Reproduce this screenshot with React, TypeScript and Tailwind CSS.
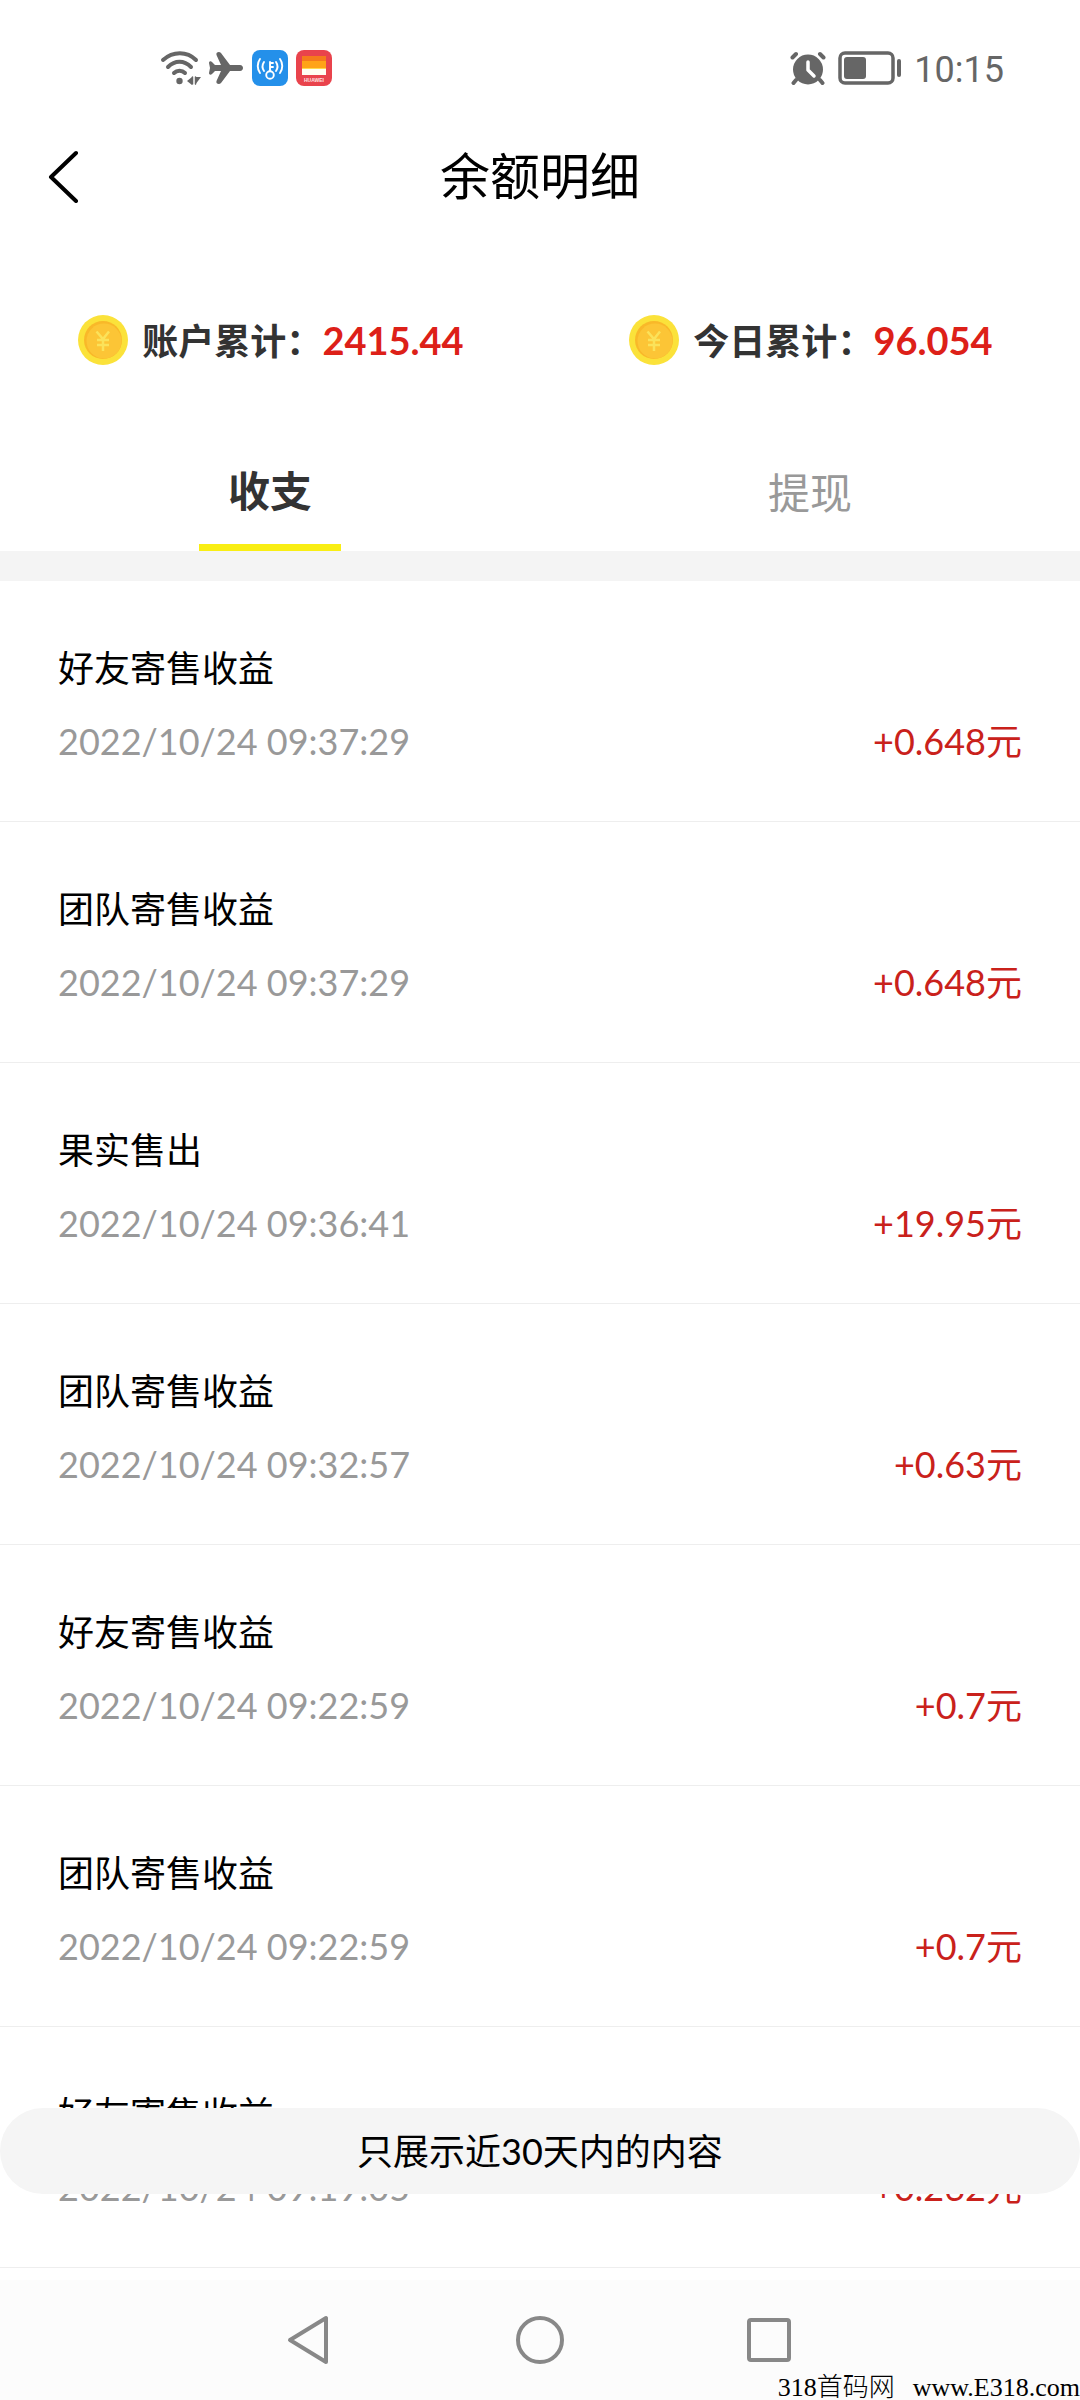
import { useState } from 'react'
import clsx from 'clsx'

interface BalanceRecord {
  id: number
  title: string
  time: string
  amount: string
}

const records: BalanceRecord[] = [
  { id: 1, title: '好友寄售收益', time: '2022/10/24 09:37:29', amount: '+0.648' },
  { id: 2, title: '团队寄售收益', time: '2022/10/24 09:37:29', amount: '+0.648' },
  { id: 3, title: '果实售出', time: '2022/10/24 09:36:41', amount: '+19.95' },
  { id: 4, title: '团队寄售收益', time: '2022/10/24 09:32:57', amount: '+0.63' },
  { id: 5, title: '好友寄售收益', time: '2022/10/24 09:22:59', amount: '+0.7' },
  { id: 6, title: '团队寄售收益', time: '2022/10/24 09:22:59', amount: '+0.7' },
  { id: 7, title: '好友寄售收益', time: '2022/10/24 09:19:05', amount: '+0.262' }
]

const tabs = ['收支', '提现']

const WifiIcon = () => (
  <svg width="42" height="36" viewBox="0 0 42 36" fill="none" stroke="#666" strokeWidth="4" strokeLinecap="round">
    <path d="M3 10C13 1 27 1 36 10" />
    <path d="M8 17C15 10 24 10 31 17" />
    <path d="M14 23C17 20 22 20 25 23" />
    <circle cx="19.500" cy="31" r="3.200" fill="#666" stroke="none" />
    <path d="M27 31L32 27V35ZM35 27H41L35 35Z" fill="#666" stroke="none" />
    <path d="M32.500 27V34M35.500 27V34" strokeWidth="1.500" />
  </svg>
)

const PlaneIcon = () => (
  <svg width="36" height="36" viewBox="0 0 36 36" fill="#666">
    <path d="M1 13C1 11 3 11 4 12L7 15H13L8.500 5C7.500 2 11.500 1 13 3L22 15H32C36 15 36 21 32 21H22L13 33C11.500 35 7.500 34 8.500 31L13 21H7L4 24C3 25 1 25 1 23L2 18Z" />
  </svg>
)

const HotspotIcon = () => (
  <svg width="36" height="36" viewBox="0 0 36 36" fill="none" stroke="#fff" strokeWidth="1.900" strokeLinecap="round">
    <rect width="36" height="36" rx="8" fill="#2490ea" stroke="none" />
    <circle cx="18" cy="25" r="3.800" />
    <path d="M18 21V12M18 13H21M18 17H21" />
    <path d="M12 12C10 15 10 18 12 21M8 9C5 13 5 19 8 23M24 12C26 15 26 18 24 21M28 9C31 13 31 19 28 23" />
  </svg>
)

const HuaweiIcon = () => (
  <svg width="36" height="36" viewBox="0 0 36 36">
    <rect width="36" height="36" rx="8" fill="#e9434c" />
    <rect x="6" y="6" width="24" height="5" fill="#f57a1c" />
    <rect x="6" y="11" width="24" height="7" fill="#ffa318" />
    <rect x="6" y="18" width="24" height="1" fill="#ffd94d" />
    <rect x="6" y="19" width="24" height="6" fill="#fffdf2" />
    <text x="18" y="32" fill="#ffe2e2" fontSize="5" fontWeight="700" textAnchor="middle" fontFamily="Liberation Sans">HUAWEI</text>
  </svg>
)

const AlarmIcon = () => (
  <svg width="36" height="36" viewBox="0 0 36 36" fill="none" stroke="#666" strokeWidth="4" strokeLinecap="round">
    <circle cx="18" cy="19.500" r="15" fill="#666" stroke="none" />
    <path d="M2.500 7.500L6 4M30 4L33.500 7.500M3.500 33L6 30M30 30L32.500 33" />
    <path d="M18 12V20L24 26" stroke="#fff" strokeWidth="3.500" strokeLinejoin="round" />
  </svg>
)

const BatteryIcon = () => (
  <svg width="64" height="36" viewBox="0 0 64 36" fill="none">
    <rect x="2" y="3" width="53" height="30" rx="5" stroke="#666" strokeWidth="3.500" />
    <rect x="6" y="7" width="22" height="22" rx="3" fill="#666" />
    <path d="M61 11V25" stroke="#666" strokeWidth="4" strokeLinecap="round" />
  </svg>
)

const CoinIcon = () => (
  <svg width="50" height="50" viewBox="0 0 50 50" fill="none">
    <circle cx="25" cy="25" r="25" fill="#fbe23a" />
    <circle cx="25" cy="25" r="19" fill="#f9b829" />
    <circle cx="26" cy="26" r="17.500" fill="#fcc536" />
    <path d="M18.500 16.500L25 24L31 16.500M25 24V36M19 25H31M19 30H31" stroke="#fbe25a" strokeWidth="2.500" />
  </svg>
)

interface TotalProps {
  label: string
  value: string
}

const Total = ({ label, value }: TotalProps) => (
  <div className="flex flex-1 items-center justify-center gap-3.5 pl-0.5">
    <CoinIcon />
    <p className="text-[36px] leading-[54px] font-bold text-[#333]">
      {label}：<span className="text-[38px] text-[#dd2018]">{value}</span>
    </p>
  </div>
)

export default function App() {
  const [activeTab, setActiveTab] = useState(tabs[0])

  return (
    <div className="relative flex min-h-screen flex-col bg-white font-[Lato,'Noto_Sans_CJK_SC',sans-serif] text-black">
      {/* Status bar */}
      <div className="flex h-[126px] items-start justify-between pt-[50px] pr-[76px] pl-[160px]">
        <div className="flex items-center gap-2">
          <div className="flex items-center gap-1.5">
            <WifiIcon />
            <PlaneIcon />
          </div>
          <HotspotIcon />
          <HuaweiIcon />
        </div>
        <div className="flex items-start gap-3">
          <AlarmIcon />
          <BatteryIcon />
          <span className="pt-0.5 font-[Roboto,sans-serif] text-[36px] leading-[36px] text-[#666]">10:15</span>
        </div>
      </div>

      {/* Header */}
      <header className="grid h-[100px] grid-cols-[1fr_auto_1fr] items-center px-12">
        <button type="button" aria-label="返回" className="justify-self-start">
          <svg width="32" height="54" viewBox="0 0 32 54" fill="none" stroke="#000" strokeWidth="4" strokeLinecap="round" strokeLinejoin="round">
            <path d="M28 4L3 28L28 52" />
          </svg>
        </button>
        <h1 className="text-[50px] leading-[72px]">余额明细</h1>
      </header>

      {/* Totals */}
      <section className="flex h-[228px]">
        <Total label="账户累计" value="2415.44" />
        <Total label="今日累计" value="96.054" />
      </section>

      {/* Tabs */}
      <div role="tablist" className="flex h-[97px]">
        {tabs.map((tab) => (
          <div key={tab} className="flex flex-1 justify-center">
            <button
              type="button"
              role="tab"
              aria-selected={tab === activeTab}
              onClick={() => setActiveTab(tab)}
              className={clsx(
                'flex w-[142px] items-start justify-center border-b-[7px] text-[42px] leading-[54px]',
                tab === activeTab ? 'border-[#f9ee14] pt-2.5 font-bold text-[#333]' : 'border-transparent pt-3 text-[#999]'
              )}
            >
              {tab}
            </button>
          </div>
        ))}
      </div>
      <div className="h-[30px] bg-[#f4f4f4]" />

      {/* Records */}
      <main className="relative flex-1">
        <ul>
          {records.map((record) => (
            <li key={record.id} className="border-b border-[#eee] px-[58px] pt-[60px] pb-[53px] text-[36px] leading-[54px]">
              <p>{record.title}</p>
              <div className="mt-[19px] flex justify-between">
                <time className="text-[#999]">{record.time}</time>
                <span className="text-[#c9211b]">{record.amount}元</span>
              </div>
            </li>
          ))}
        </ul>
        <div className="absolute inset-x-0 bottom-[86px] flex h-[86px] items-center justify-center rounded-full bg-[#f5f5f5] text-[36px] leading-[54px]">
          只展示近30天内的内容
        </div>
      </main>

      {/* System navigation */}
      <nav className="flex h-[120px] items-center justify-center gap-[180px] bg-[#fcfcfc]">
        <button type="button" aria-label="后退">
          <svg width="50" height="50" viewBox="0 0 50 50" fill="none" stroke="#888" strokeWidth="4" strokeLinejoin="round">
            <path d="M5 25L41 3V47Z" />
          </svg>
        </button>
        <button type="button" aria-label="主页">
          <svg width="50" height="50" viewBox="0 0 50 50" fill="none" stroke="#888" strokeWidth="4">
            <circle cx="25" cy="25" r="22" />
          </svg>
        </button>
        <button type="button" aria-label="最近任务">
          <svg width="50" height="50" viewBox="0 0 50 50" fill="none" stroke="#888" strokeWidth="4">
            <rect x="4" y="5" width="40" height="40" rx="2" />
          </svg>
        </button>
      </nav>

      <p className="absolute right-0 bottom-0 flex gap-[18px] font-['Liberation_Serif','Noto_Sans_CJK_SC',serif] text-[26px] leading-[24px] font-light">
        <span>318首码网</span>
        <span>www.E318.com</span>
      </p>
    </div>
  )
}
